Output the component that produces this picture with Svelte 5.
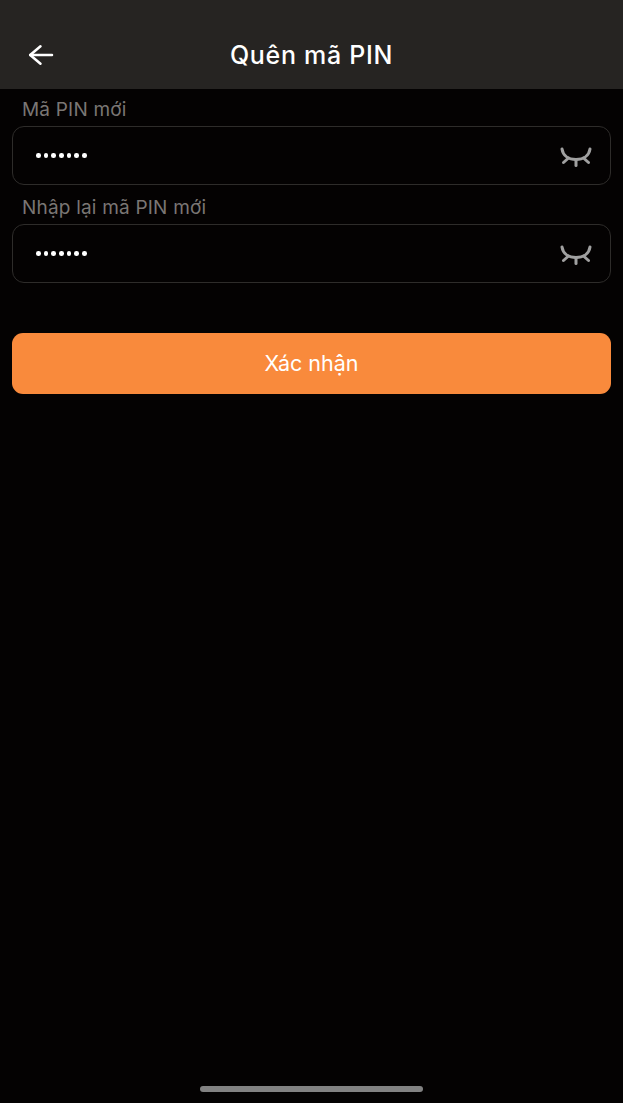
<script>
  const fields = ["Mã PIN mới", "Nhập lại mã PIN mới"];
</script>

<div class="page">
  <header class="bar">
    <button class="back" aria-label="Quay lại">
      <svg width="26" height="22" viewBox="0 0 26 22" fill="none" stroke="#fff" stroke-width="2.500" stroke-linecap="round" stroke-linejoin="round">
        <path d="M2.200 11H24" />
        <path d="M12.500 2.200L2.200 11L12.500 19.800" />
      </svg>
    </button>
    <h1>Quên mã PIN</h1>
  </header>

  <main class="content">
    {#each fields as label}
      <div class="field">
        <div class="label">{label}</div>
        <div class="input">
          <span class="dots">
            {#each Array(7) as _}<i></i>{/each}
          </span>
          <svg class="eye" width="32" height="22" viewBox="0 0 32 22" fill="none" stroke="#a0a0a0" stroke-width="3" stroke-linecap="round">
            <path d="M2 4C3 11 9 14.500 16 14.500C23 14.500 29 11 30 4" />
            <path d="M16 14.500V20.500" />
            <path d="M8.500 13L3.500 17.500" />
            <path d="M23.500 13L28.500 17.500" />
          </svg>
        </div>
      </div>
    {/each}
    <button class="submit">Xác nhận</button>
  </main>

  <div class="home"></div>
</div>

<style>
  :global(body) {
    margin: 0;
    background: #040202;
  }
  .page {
    width: 623px;
    height: 1103px;
    display: flex;
    flex-direction: column;
    background: #040202;
    font-family: Inter, "Noto Sans", sans-serif;
    overflow: hidden;
  }
  .bar {
    height: 89px;
    flex: none;
    background: #262422;
    display: flex;
    align-items: center;
    justify-content: center;
    padding-top: 20px;
    box-sizing: border-box;
    position: relative;
  }
  .back {
    position: absolute;
    left: 28px;
    top: 44px;
    padding: 0;
    border: 0;
    background: none;
    display: flex;
  }
  h1 {
    margin: 0;
    color: #fff;
    font-size: 25px;
    font-weight: 500;
    line-height: 28px;
    letter-spacing: 0.7px;
  }
  .content {
    flex: 1;
    padding: 10px 12px 0;
    display: flex;
    flex-direction: column;
  }
  .field {
    margin-bottom: 12px;
  }
  .label {
    color: #7a7674;
    font-size: 19px;
    line-height: 22px;
    letter-spacing: 0.2px;
    padding-left: 10px;
    margin-bottom: 5px;
  }
  .input {
    height: 59px;
    box-sizing: border-box;
    border: 1px solid #2e2c2a;
    border-radius: 12px;
    display: flex;
    align-items: center;
    justify-content: space-between;
    padding: 0 18px 0 23px;
  }
  .dots {
    display: flex;
    gap: 3.100px;
  }
  .dots i {
    width: 4.600px;
    height: 4.600px;
    border-radius: 50%;
    background: #fff;
  }
  .submit {
    margin-top: 38px;
    height: 61px;
    padding: 0 0 1px;
    border: 0;
    border-radius: 11px;
    background: #f98a3c;
    color: #fff;
    font-family: inherit;
    font-size: 21.500px;
    font-weight: 400;
  }
  .home {
    flex: none;
    width: 223px;
    height: 6px;
    margin: 0 auto 11px;
    border-radius: 3px;
    background: #828282;
  }
</style>
